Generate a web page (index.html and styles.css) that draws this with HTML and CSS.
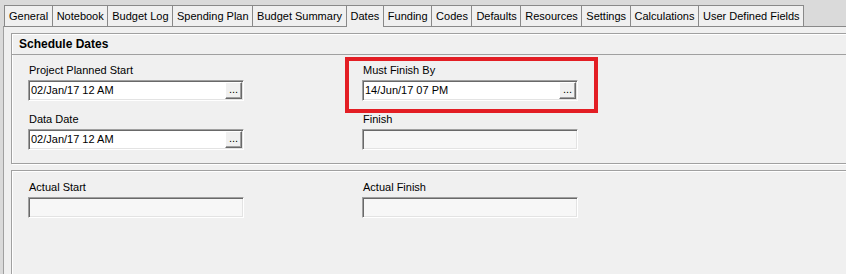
FILE: index.html
```html
<!DOCTYPE html>
<html>
<head>
<meta charset="utf-8">
<link rel="stylesheet" href="styles.css">
</head>
<body>
<div class="tabs">
  <div class="tab">General</div>
  <div class="tab">Notebook</div>
  <div class="tab">Budget Log</div>
  <div class="tab">Spending Plan</div>
  <div class="tab">Budget Summary</div>
  <div class="tab active">Dates</div>
  <div class="tab">Funding</div>
  <div class="tab">Codes</div>
  <div class="tab">Defaults</div>
  <div class="tab">Resources</div>
  <div class="tab">Settings</div>
  <div class="tab">Calculations</div>
  <div class="tab">User Defined Fields</div>
</div>
<div class="panel">
  <div class="group group-top">
    <div class="group-head">Schedule Dates</div>
    <div class="group-body">
      <div class="field">
        <div class="label">Project Planned Start</div>
        <div class="input"><span class="value">02/Jan/17 12 AM</span><span class="btn">...</span></div>
      </div>
      <div class="field">
        <div class="label">Must Finish By</div>
        <div class="input"><span class="value">14/Jun/17 07 PM</span><span class="btn">...</span></div>
        <div class="highlight"></div>
      </div>
      <div class="field">
        <div class="label">Data Date</div>
        <div class="input"><span class="value">02/Jan/17 12 AM</span><span class="btn">...</span></div>
      </div>
      <div class="field">
        <div class="label">Finish</div>
        <div class="input disabled"></div>
      </div>
    </div>
  </div>
  <div class="group group-bottom">
    <div class="group-body">
      <div class="field">
        <div class="label">Actual Start</div>
        <div class="input disabled"></div>
      </div>
      <div class="field">
        <div class="label">Actual Finish</div>
        <div class="input disabled"></div>
      </div>
    </div>
  </div>
</div>
</body>
</html>
```
FILE: styles.css
```css
* { box-sizing: border-box; }
html, body {
  margin: 0;
  padding: 0;
  height: 274px;
  overflow: hidden;
  background: #dadada;
  font-family: "Liberation Sans", Arial, sans-serif;
  font-size: 11px;
  color: #000;
}
.tabs {
  display: flex;
  padding: 5px 0 0 4px;
  height: 26px;
}
.tab {
  height: 21px;
  line-height: 20px;
  padding: 0 3.5px 0 4px;
  border: 1px solid #898989;
  border-bottom: none;
  margin-right: -1px;
  background: #f0f0f0;
  white-space: nowrap;
  position: relative;
}
.tab.active {
  height: 22px;
  margin-bottom: -1px;
  z-index: 1;
}
.panel {
  margin-left: 3px;
  margin-right: -20px;
  height: 248px;
  overflow: hidden;
  border-left: 1px solid #a0a0a0;
  border-top: 1px solid #898989;
  background: #f0f0f0;
  padding: 6px 0 0 7px;
}
.group {
  border: 1px solid #a0a0a0;
  box-shadow: inset 1px 1px 0 #fff, 1px 1px 0 #fff;
}
.group-head {
  height: 21px;
  line-height: 20px;
  padding-left: 7px;
  font-size: 12px;
  font-weight: bold;
  border-bottom: 1px solid #a0a0a0;
}
.group-body {
  display: grid;
  grid-template-columns: 216px 216px;
  column-gap: 118px;
  row-gap: 12px;
  padding: 9px 0 13px 16px;
}
.group-bottom {
  margin-top: 6px;
  height: 110px;
}
.group-bottom .group-body {
  padding-top: 10px;
}
.field {
  position: relative;
  display: flex;
  flex-direction: column;
  gap: 3px;
}
.label {
  line-height: 13px;
  padding-left: 1px;
  white-space: nowrap;
}
.input {
  height: 21px;
  display: flex;
  align-items: center;
  justify-content: space-between;
  background: #fff;
  border: 1px solid;
  border-color: #a0a0a0 #fff #fff #a0a0a0;
  box-shadow: inset 1px 1px 0 #696969, inset -1px -1px 0 #e3e3e3;
  padding: 1px 1px 1px 2px;
}
.input.disabled {
  background: #f7f7f7;
}
.value {
  white-space: nowrap;
  line-height: 13px;
}
.btn {
  width: 17px;
  height: 17px;
  align-self: flex-start;
  background: #f0f0f0;
  border: 1px solid;
  border-color: #fff #696969 #696969 #fff;
  box-shadow: inset -1px -1px 0 #a0a0a0;
  font-size: 11px;
  line-height: 13px;
  text-align: center;
  overflow: hidden;
}
.highlight {
  position: absolute;
  left: -17px;
  top: -7px;
  right: -20px;
  bottom: -12px;
  border: 4px solid #e31e24;
  pointer-events: none;
}
```
